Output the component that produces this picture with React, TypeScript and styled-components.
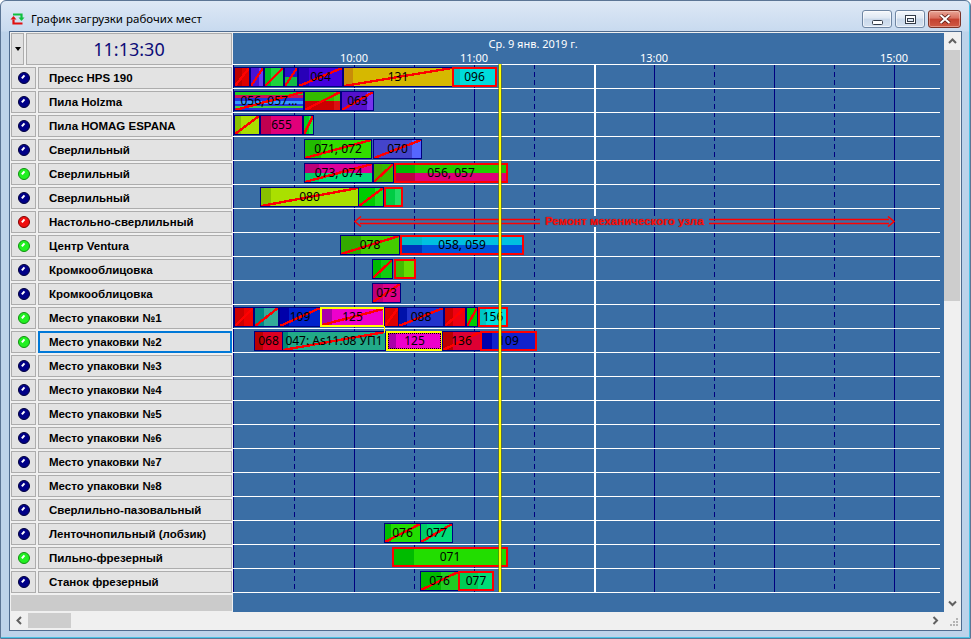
import * as React from 'react';
import styled, { createGlobalStyle, css } from 'styled-components';

type LampState = 'idle' | 'run' | 'alarm';
type Frame = 'plain' | 'red' | 'yellow' | 'focus';
type Tone = string | [string, string];

interface Order {
  from: number;
  to: number;
  bg: string;
  label?: string;
  done?: boolean;
  frame?: Frame;
}

// page x of the chart's left edge; order positions below are page x
const ORIGIN = 233;

const tone = (c: Tone) =>
  Array.isArray(c) ? `linear-gradient(${c[0]} 50%, ${c[1]} 50%)` : `linear-gradient(${c}, ${c})`;

function paint(main: Tone, lead?: Tone, leadW = 0, tail?: Tone, tailW = 0) {
  const layers: string[] = [];
  if (lead) layers.push(`${tone(lead)} left top / ${leadW}px 100% no-repeat`);
  if (tail) layers.push(`${tone(tail)} right top / ${tailW}px 100% no-repeat`);
  layers.push(tone(main));
  return layers.join(', ');
}

const machines: [string, LampState][] = [
  ['Пресс HPS 190', 'idle'],
  ['Пила Holzma', 'idle'],
  ['Пила HOMAG ESPANA', 'idle'],
  ['Сверлильный', 'idle'],
  ['Сверлильный', 'run'],
  ['Сверлильный', 'idle'],
  ['Настольно-сверлильный', 'alarm'],
  ['Центр Ventura', 'run'],
  ['Кромкооблицовка', 'idle'],
  ['Кромкооблицовка', 'idle'],
  ['Место упаковки №1', 'run'],
  ['Место упаковки №2', 'run'],
  ['Место упаковки №3', 'idle'],
  ['Место упаковки №4', 'idle'],
  ['Место упаковки №5', 'idle'],
  ['Место упаковки №6', 'idle'],
  ['Место упаковки №7', 'idle'],
  ['Место упаковки №8', 'idle'],
  ['Сверлильно-пазовальный', 'idle'],
  ['Ленточнопильный (лобзик)', 'idle'],
  ['Пильно-фрезерный', 'run'],
  ['Станок фрезерный', 'idle'],
];

const SELECTED = 11;

const stripes =
  'linear-gradient(#22cc22 0 16%, #cc1155 16% 32%, #2233dd 32% 50%, #3399ff 50% 64%, #2233dd 64% 78%, #44cc44 78% 90%, #2233dd 90%)';

const orders: Record<number, Order[]> = {
  0: [
    { from: 234, to: 249, bg: paint('#dd0000', '#bb0000', 7), done: true },
    { from: 250, to: 263, bg: paint('#4a12d4', undefined, 0, '#6a3af0', 4), done: true },
    { from: 264, to: 283, bg: paint('#1ed23c', '#00bb22', 6), done: true },
    { from: 284, to: 297, bg: paint(['#2a10cc', '#11bb44']), done: true },
    { from: 298, to: 342, bg: paint('#4400dd', '#2800b8', 10), label: '064', done: true },
    { from: 343, to: 452, bg: paint('#d6b800', '#c88c08', 9), label: '131', done: true },
    { from: 452, to: 496, bg: paint('#00dcdc', '#00c4c4', 6), label: '096', frame: 'red' },
  ],
  1: [
    { from: 234, to: 303, bg: stripes, label: '056, 057...', done: true },
    { from: 304, to: 340, bg: paint(['#33bb00', '#cc0000'], undefined, 0, ['#44cc11', '#dd1111'], 6), done: true },
    { from: 341, to: 373, bg: paint('#5511cc', undefined, 0, '#7733ee', 6), label: '063', done: true },
  ],
  2: [
    { from: 234, to: 259, bg: paint('#aadd00', '#88c000', 6), done: true },
    { from: 260, to: 302, bg: paint('#e0007a', '#c00050', 10), label: '655' },
    { from: 303, to: 313, bg: paint('#00cc22', undefined, 0, '#22dd44', 4), done: true },
  ],
  3: [
    { from: 304, to: 371, bg: paint('#33dd00', '#22bb00', 16), label: '071, 072', done: true },
    { from: 373, to: 421, bg: paint('#4444cc', undefined, 0, '#5566ff', 9), label: '070', done: true },
  ],
  4: [
    { from: 304, to: 372, bg: paint(['#dd0099', '#00dd77'], ['#bb0077', '#00cc66'], 14), label: '073, 074', done: true },
    { from: 373, to: 393, bg: paint('#33bb00', '#44aa00', 8), done: true },
    { from: 394, to: 507, bg: paint(['#22cc00', '#dd0077'], ['#00bb00', '#c00044'], 19), label: '056, 057', frame: 'red' },
  ],
  5: [
    { from: 260, to: 358, bg: paint('#aae000', '#88c000', 10), label: '080', done: true },
    { from: 358, to: 383, bg: paint('#00cc00', undefined, 0, '#22dd22', 8), done: true },
    { from: 384, to: 402, bg: paint('#00cc44', undefined, 0, '#22dd66', 6), frame: 'red' },
  ],
  7: [
    { from: 340, to: 399, bg: paint('#44cc00', '#33aa00', 20), label: '078', done: true },
    { from: 400, to: 523, bg: paint(['#00c0e0', '#0055dd'], ['#00b8c8', '#0033bb'], 20), label: '058, 059', frame: 'red' },
  ],
  8: [
    { from: 372, to: 392, bg: paint('#11cc11', '#00bb00', 8), done: true },
    { from: 394, to: 415, bg: paint('#66dd00', '#44bb00', 8), frame: 'red' },
  ],
  9: [{ from: 372, to: 400, bg: paint('#dd0088', '#bb0077', 10), label: '073', done: true }],
  10: [
    { from: 234, to: 253, bg: paint('#ee0000', '#cc0000', 9), done: true },
    { from: 254, to: 278, bg: paint('#33aa99', '#008888', 9), done: true },
    { from: 279, to: 320, bg: paint('#0022cc', '#0000aa', 9), label: '109', done: true },
    { from: 320, to: 384, bg: paint('#ee00cc', '#aa00aa', 10), label: '125', done: true, frame: 'yellow' },
    { from: 384, to: 398, bg: paint('#dd0000'), done: true },
    { from: 398, to: 443, bg: paint('#2233cc', '#0011aa', 8), label: '088', done: true },
    { from: 444, to: 465, bg: paint('#ee0011', '#cc0000', 8), done: true },
    { from: 466, to: 477, bg: paint('#00cc00'), done: true },
    { from: 478, to: 507, bg: paint('#00dddd', '#00c4c4', 6), label: '156', frame: 'red' },
  ],
  11: [
    { from: 254, to: 282, bg: paint('#dd0022', '#bb0000', 8), label: '068' },
    { from: 282, to: 385, bg: paint('#22aa88', '#008877', 5), label: '047: As11.08 УП1', done: true },
    { from: 386, to: 442, bg: paint('#ee00cc', '#aa00aa', 8), label: '125', frame: 'focus' },
    { from: 442, to: 480, bg: paint('#dd0033', '#bb0000', 10), label: '136', done: true },
    { from: 480, to: 536, bg: paint('#1122cc', '#0000aa', 10), label: '109', frame: 'red' },
  ],
  19: [
    { from: 384, to: 420, bg: paint('#22dd00', '#00bb00', 6), label: '076', done: true },
    { from: 420, to: 452, bg: paint('#00dd77', '#00cc66', 6), label: '077', done: true },
  ],
  20: [{ from: 392, to: 507, bg: paint('#22dd00', '#00bb00', 20), label: '071', frame: 'red' }],
  21: [
    { from: 420, to: 458, bg: paint('#22cc22', '#00bb00', 20), label: '076', done: true },
    { from: 458, to: 493, bg: paint('#00dd77', '#00cc55', 18), label: '077', frame: 'red' },
  ],
};

const hours = [
  { x: 354, text: '10:00' },
  { x: 474, text: '11:00' },
  { x: 654, text: '13:00' },
  { x: 894, text: '15:00' },
];

type LineKind = 'solid' | 'dashed' | 'break';
const gridLines: { x: number; kind: LineKind }[] = [
  { x: 233, kind: 'solid' },
  { x: 294, kind: 'dashed' },
  { x: 354, kind: 'solid' },
  { x: 414, kind: 'dashed' },
  { x: 474, kind: 'solid' },
  { x: 534, kind: 'dashed' },
  { x: 594, kind: 'break' },
  { x: 654, kind: 'solid' },
  { x: 714, kind: 'dashed' },
  { x: 774, kind: 'solid' },
  { x: 834, kind: 'dashed' },
  { x: 894, kind: 'solid' },
];

const GlobalStyle = createGlobalStyle`
  html, body {
    margin: 0;
    padding: 0;
    background: #ffffff;
    overflow: hidden;
  }
  * {
    box-sizing: border-box;
  }
`;

const Window = styled.div`
  width: 971px;
  height: 639px;
  display: flex;
  flex-direction: column;
  border: 1px solid #5b7595;
  border-radius: 6px 6px 0 0;
  background: linear-gradient(#dde8f5 0, #c8daef 30px, #bdd3ea 31px);
  box-shadow: inset -1px -1px 0 #4cc2e4;
  font-family: "Noto Sans", "Liberation Sans", sans-serif;
`;

const TitleBar = styled.div`
  height: 30px;
  flex: none;
  display: flex;
  align-items: flex-start;
  padding: 0 9px 0 9px;
`;

const AppIcon = styled.svg`
  margin-top: 10px;
  flex: none;
`;

const Caption = styled.span`
  flex: 1;
  margin: 10px 0 0 5px;
  font-size: 11.5px;
  line-height: 16px;
  color: #000000;
`;

const CaptionButtons = styled.div`
  display: flex;
  gap: 3px;
  margin-top: 9px;
`;

const CaptionButton = styled.div<{ $close?: boolean }>`
  width: ${(p) => (p.$close ? 33 : 30)}px;
  height: 18px;
  display: flex;
  align-items: center;
  justify-content: center;
  border-radius: 3px;
  border: 1px solid #6f86a3;
  background: linear-gradient(#f4f7fb 0%, #dfe8f3 45%, #c9d8ea 50%, #d6e2f0 100%);
  box-shadow: inset 0 0 0 1px rgba(255, 255, 255, 0.6);
  ${(p) =>
    p.$close &&
    css`
      border-color: #7b3328;
      background: linear-gradient(#e8a697 0%, #d9705f 45%, #c4412f 50%, #cf5a44 100%);
      box-shadow: inset 0 0 0 1px rgba(255, 220, 210, 0.45);
    `}
`;

const Client = styled.div`
  flex: 1;
  margin: 0 8px 7px 8px;
  border: 1px solid #4e6b8f;
  background: #f0f0f0;
  padding: 1px 0 0 1px;
  display: grid;
  grid-template-columns: 222px 711px 17px;
  grid-template-rows: 579px 1fr;
  overflow: hidden;
`;

const LeftPanel = styled.div`
  display: flex;
  flex-direction: column;
  gap: 2px;
  padding-right: 1px;
  background: #f0f0f0;
  overflow: hidden;
`;

const PanelHeader = styled.div`
  height: 32px;
  flex: none;
  display: flex;
  gap: 2px;
`;

const DropButton = styled.div`
  width: 13px;
  display: flex;
  align-items: center;
  justify-content: center;
  border: 1px solid #adadad;
  background: #e1e1e1;
  &::after {
    content: '';
    border-left: 3px solid transparent;
    border-right: 3px solid transparent;
    border-top: 4px solid #000000;
  }
`;

const Clock = styled.div`
  flex: 1;
  display: flex;
  align-items: center;
  justify-content: center;
  border: 1px solid #adadad;
  background: #e1e1e1;
  color: #0c0c78;
  font-size: 18px;
  padding-bottom: 1px;
`;

const MachineRow = styled.div`
  height: 22px;
  flex: none;
  display: grid;
  grid-template-columns: 25px 1fr;
  gap: 2px;
`;

const LampCell = styled.div`
  display: flex;
  align-items: center;
  justify-content: center;
  border: 1px solid #adadad;
  background: #e3e3e3;
`;

const lampColors: Record<LampState, [string, string]> = {
  idle: ['#000088', '#00003c'],
  run: ['#22f022', '#109010'],
  alarm: ['#f01010', '#800000'],
};

const Lamp = styled.span<{ $state: LampState }>`
  position: relative;
  width: 12px;
  height: 12px;
  border-radius: 50%;
  background: ${(p) => lampColors[p.$state][0]};
  border: 1px solid ${(p) => lampColors[p.$state][1]};
  &::after {
    content: '';
    position: absolute;
    left: 2px;
    top: 3px;
    width: 4px;
    height: 1.5px;
    background: #ffffff;
    transform: rotate(-50deg);
  }
`;

const NameCell = styled.div<{ $selected?: boolean }>`
  display: flex;
  align-items: center;
  padding-left: 10px;
  border: 1px solid #adadad;
  background: #e3e3e3;
  font-family: "Liberation Sans", Arial, sans-serif;
  font-weight: bold;
  font-size: 11.5px;
  color: #000000;
  white-space: nowrap;
  ${(p) =>
    p.$selected &&
    css`
      border: 2px solid #0078d7;
      padding-left: 9px;
    `}
`;

const Filler = styled.div`
  height: 16px;
  flex: none;
  background: #cbcbcb;
`;

const Chart = styled.div`
  position: relative;
  background: #3a6ea5;
  overflow: hidden;
`;

const ChartHeader = styled.div`
  position: relative;
  height: 31px;
  color: #ffffff;
  font-size: 11px;
  line-height: 12px;
`;

const DateLabel = styled.span`
  position: absolute;
  top: 5px;
  left: 300px;
  transform: translateX(-50%);
  white-space: nowrap;
`;

const HourLabel = styled.span`
  position: absolute;
  top: 19px;
  transform: translateX(-50%);
  white-space: nowrap;
`;

const ChartBody = styled.div`
  position: relative;
  width: 707px;
  border-bottom: 1px solid #ffffff;
`;

const Lane = styled.div`
  position: relative;
  height: 24px;
  border-top: 1px solid #ffffff;
`;

const GridLine = styled.div<{ $kind: LineKind }>`
  position: absolute;
  top: 0;
  bottom: 0;
  width: ${(p) => (p.$kind === 'break' ? 2 : 1)}px;
  background: ${(p) =>
    p.$kind === 'dashed'
      ? 'repeating-linear-gradient(#000080 0 5px, transparent 5px 8px)'
      : p.$kind === 'break'
        ? '#ffffff'
        : '#000080'};
`;

const frames: Record<Frame, ReturnType<typeof css>> = {
  plain: css`
    border: 1px solid #000080;
  `,
  red: css`
    border: 2px solid #ff0000;
  `,
  yellow: css`
    border: 2px solid #ffff00;
  `,
  focus: css`
    border: 2px solid #ffff00;
    &::before {
      content: '';
      position: absolute;
      inset: 0;
      border: 1px dotted #000000;
    }
  `,
};

const OrderBar = styled.div<{ $frame: Frame; $done: boolean }>`
  position: absolute;
  top: 2px;
  height: 20px;
  display: flex;
  align-items: center;
  justify-content: center;
  overflow: hidden;
  ${(p) => frames[p.$frame]}
  ${(p) =>
    p.$done &&
    css`
      &::after {
        content: '';
        position: absolute;
        inset: 0;
        background: linear-gradient(
          to top left,
          transparent calc(50% - 1.2px),
          #ff0000 calc(50% - 1.2px),
          #ff0000 calc(50% + 1.2px),
          transparent calc(50% + 1.2px)
        );
      }
    `}
`;

const OrderLabel = styled.span`
  position: relative;
  z-index: 1;
  font-size: 12px;
  line-height: 1;
  color: #000000;
  white-space: nowrap;
`;

const Repair = styled.div`
  position: absolute;
  top: 7px;
  left: 121px;
  width: 541px;
  height: 11px;
  display: flex;
  align-items: center;
  justify-content: center;
`;

const RepairArrow = styled.svg`
  position: absolute;
  inset: 0;
`;

const RepairLabel = styled.span`
  position: relative;
  padding: 0 5px;
  background: #3a6ea5;
  color: #ff1010;
  font-family: "Liberation Sans", Arial, sans-serif;
  font-weight: bold;
  font-size: 11.5px;
  line-height: 11px;
  text-shadow: 0 0 1px #600000;
`;

const Link = styled.div`
  position: absolute;
  z-index: 2;
  width: 1px;
  background: #ffff00;
`;

const NowLine = styled.div`
  position: absolute;
  z-index: 3;
  top: 0;
  bottom: 0;
  width: 2px;
  background: #ffff00;
  box-shadow: 1px 0 0 rgba(110, 110, 0, 0.55), -1px 0 0 rgba(110, 110, 0, 0.55);
`;

const VScroll = styled.div`
  display: flex;
  flex-direction: column;
  background: #f0f0f0;
`;

const HScroll = styled.div`
  grid-column: 1 / -1;
  display: flex;
  align-items: stretch;
  height: 17px;
  background: #f0f0f0;
`;

const ArrowButton = styled.div`
  width: 17px;
  height: 17px;
  flex: none;
  display: flex;
  align-items: center;
  justify-content: center;
`;

const VThumb = styled.div`
  height: 251px;
  margin-right: 1px;
  background: #cdcdcd;
`;

const HThumb = styled.div`
  width: 43px;
  margin: 1px 0;
  background: #cdcdcd;
`;

const Spacer = styled.div`
  flex: 1;
`;

const Grip = styled.svg`
  margin: auto 3px 3px auto;
`;

function Chevron({ dir }: { dir: 'up' | 'down' | 'left' | 'right' }) {
  const pts = {
    up: '1,5 4.5,1.5 8,5',
    down: '1,1.5 4.5,5 8,1.5',
    left: '5,1 1.5,4.5 5,8',
    right: '1.5,1 5,4.5 1.5,8',
  }[dir];
  const vertical = dir === 'up' || dir === 'down';
  return (
    <svg width={vertical ? 9 : 7} height={vertical ? 7 : 9}>
      <polyline points={pts} fill="none" stroke="#606060" strokeWidth="2" />
    </svg>
  );
}

function RepairMark() {
  return (
    <Repair>
      <RepairArrow width="541" height="11" viewBox="0 0 541 11">
        <g fill="none" stroke="#ff0000" strokeWidth="1.6">
          <line x1="6" y1="3.5" x2="535" y2="3.5" />
          <line x1="6" y1="7.5" x2="535" y2="7.5" />
          <polyline points="7,0.5 1,5.5 7,10.5" />
          <polyline points="534,0.5 540,5.5 534,10.5" />
        </g>
      </RepairArrow>
      <RepairLabel>Ремонт механического узла</RepairLabel>
    </Repair>
  );
}

export default function App() {
  return (
    <>
      <GlobalStyle />
      <Window>
        <TitleBar>
          <AppIcon width="16" height="15" viewBox="0 0 16 15">
            <path d="M3 3.5 H11.5 V7" fill="none" stroke="#10c040" strokeWidth="2.2" />
            <polygon points="8.5,6.5 14.5,6.5 11.5,10" fill="#10c040" />
            <path d="M12.5 12.5 H3.5 V8.5" fill="none" stroke="#e01010" strokeWidth="2.2" />
            <polygon points="0.5,8.5 6.5,8.5 3.5,5" fill="#e01010" />
          </AppIcon>
          <Caption>График загрузки рабочих мест</Caption>
          <CaptionButtons>
            <CaptionButton>
              <svg width="11" height="5" style={{ marginTop: 6 }}>
                <rect x="0.5" y="0.5" width="10" height="4" rx="1" fill="#ffffff" stroke="#333b47" />
              </svg>
            </CaptionButton>
            <CaptionButton>
              <svg width="11" height="9">
                <rect x="0.5" y="0.5" width="10" height="8" fill="#ffffff" stroke="#333b47" />
                <rect x="2.5" y="3.5" width="6" height="3" fill="#dbe6f3" stroke="#333b47" />
              </svg>
            </CaptionButton>
            <CaptionButton $close>
              <svg width="12" height="10" viewBox="0 0 12 10">
                <path d="M1.5 1 L10.5 9 M10.5 1 L1.5 9" stroke="#5a1a12" strokeWidth="3.6" />
                <path d="M1.5 1 L10.5 9 M10.5 1 L1.5 9" stroke="#ffffff" strokeWidth="2" />
              </svg>
            </CaptionButton>
          </CaptionButtons>
        </TitleBar>

        <Client>
          <LeftPanel>
            <PanelHeader>
              <DropButton />
              <Clock>11:13:30</Clock>
            </PanelHeader>
            {machines.map(([name, state], i) => (
              <MachineRow key={i}>
                <LampCell>
                  <Lamp $state={state} />
                </LampCell>
                <NameCell $selected={i === SELECTED}>{name}</NameCell>
              </MachineRow>
            ))}
            <Filler />
          </LeftPanel>

          <Chart>
            <ChartHeader>
              <DateLabel>Ср. 9 янв. 2019 г.</DateLabel>
              {hours.map((h) => (
                <HourLabel key={h.text} style={{ left: h.x - ORIGIN }}>
                  {h.text}
                </HourLabel>
              ))}
            </ChartHeader>
            <ChartBody>
              {gridLines.map((g) => (
                <GridLine key={g.x} $kind={g.kind} style={{ left: g.x - ORIGIN }} />
              ))}
              {machines.map((_, i) => (
                <Lane key={i}>
                  {(orders[i] || []).map((o, j) => (
                    <OrderBar
                      key={j}
                      $frame={o.frame ?? 'plain'}
                      $done={!!o.done}
                      style={{ left: o.from - ORIGIN, width: o.to - o.from + 1, background: o.bg }}
                    >
                      {o.label && <OrderLabel>{o.label}</OrderLabel>}
                    </OrderBar>
                  ))}
                  {i === 6 && <RepairMark />}
                </Lane>
              ))}
              <Link style={{ left: 384 - ORIGIN, top: 262, height: 7 }} />
              <NowLine style={{ left: 499 - ORIGIN }} />
            </ChartBody>
          </Chart>

          <VScroll>
            <ArrowButton>
              <Chevron dir="up" />
            </ArrowButton>
            <VThumb />
            <Spacer />
            <ArrowButton>
              <Chevron dir="down" />
            </ArrowButton>
          </VScroll>

          <HScroll>
            <ArrowButton>
              <Chevron dir="left" />
            </ArrowButton>
            <HThumb />
            <Spacer />
            <ArrowButton>
              <Chevron dir="right" />
            </ArrowButton>
            <ArrowButton>
              <Grip width="8" height="8" viewBox="0 0 8 8">
                <g fill="#b4b4b4">
                  <rect x="6" y="0" width="2" height="2" />
                  <rect x="3" y="3" width="2" height="2" />
                  <rect x="6" y="3" width="2" height="2" />
                  <rect x="0" y="6" width="2" height="2" />
                  <rect x="3" y="6" width="2" height="2" />
                  <rect x="6" y="6" width="2" height="2" />
                </g>
              </Grip>
            </ArrowButton>
          </HScroll>
        </Client>
      </Window>
    </>
  );
}
